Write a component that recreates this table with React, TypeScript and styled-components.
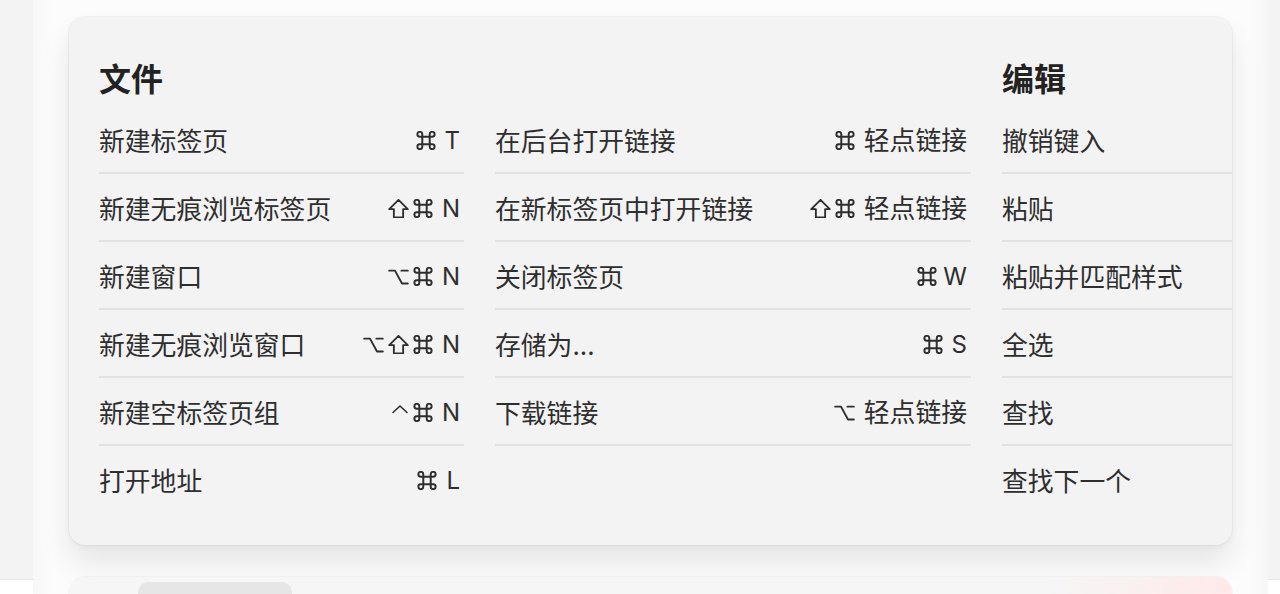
import React from "react";
import styled, { createGlobalStyle } from "styled-components";

const Global = createGlobalStyle`
  html, body {
    margin: 0;
    padding: 0;
  }
  body {
    background: linear-gradient(to bottom, #f3f3f3 0, #f3f3f3 579px, #e4e4e4 579px, #e4e4e4 580px, #ffffff 580px);
    font-family: "Inter", "Noto Sans CJK SC", "DejaVu Sans", sans-serif;
    color: #2b2b2b;
    height: 594px;
    overflow: hidden;
  }
`;

const Shell = styled.div`
  margin-left: 33px;
  width: 1235px;
  height: 594px;
  background: linear-gradient(to right, #f7f7f7 0, #fcfcfc 20px, #fcfcfc calc(100% - 20px), #f6f6f6 100%);
  padding: 17px 0 0 36px;
  box-sizing: border-box;
  display: flex;
  flex-direction: column;
  gap: 32px;
`;

const Card = styled.section`
  width: 1163px;
  height: 528px;
  flex-shrink: 0;
  box-sizing: border-box;
  background: #f3f3f3;
  border-radius: 16px;
  box-shadow: 0 18px 30px rgba(0, 0, 0, 0.09), 0 2px 6px rgba(0, 0, 0, 0.04), 0 0 0 1px rgba(0, 0, 0, 0.03);
  overflow: hidden;
  padding: 43px 0 0 30px;
  display: flex;
  gap: 31px;
`;

const Section = styled.div`
  display: flex;
  flex-direction: column;
  flex-shrink: 0;
`;

const Title = styled.h2`
  margin: 0 0 6px;
  height: 40px;
  line-height: 40px;
  font-size: 32px;
  font-weight: 700;
  color: #222;
`;

const Columns = styled.div`
  display: flex;
  gap: 31px;
`;

const List = styled.ul<{ $width: number; $lastBorder?: boolean }>`
  list-style: none;
  margin: 0;
  padding: 0;
  width: ${(p) => p.$width}px;
  flex-shrink: 0;
  & > li:last-child {
    border-bottom-color: ${(p) => (p.$lastBorder ? "#e2e2e2" : "transparent")};
  }
`;

const Row = styled.li`
  height: 66px;
  border-bottom: 2px solid #e2e2e2;
  display: flex;
  align-items: center;
  justify-content: space-between;
  padding-right: 4px;
`;

const Label = styled.span`
  font-size: 25.8px;
  color: #2e2e2e;
  white-space: nowrap;
`;

const Keys = styled.span`
  display: inline-flex;
  align-items: center;
  gap: 4px;
  padding-top: 3px;
  font-size: 24px;
  color: #2e2e2e;
  white-space: nowrap;
`;

const KeyText = styled.span<{ $tight?: boolean; $cjk?: boolean }>`
  margin-left: ${(p) => (p.$tight ? 2 : 5)}px;
  line-height: 1;
  font-size: ${(p) => (p.$cjk ? 25.8 : 24)}px;
`;

const Glyph = styled.svg`
  display: block;
  fill: none;
  stroke: #2e2e2e;
  stroke-width: 1.6;
  stroke-linejoin: round;
  stroke-linecap: round;
`;

type Sym = "cmd" | "shift" | "opt" | "ctrl";

function KeyIcon({ k }: { k: Sym }) {
  if (k === "cmd")
    return (
      <Glyph width={20} height={19} viewBox="2.3 1.3 15.4 15.4">
        <path d="M7 6V4a2 2 0 1 0-2 2h10a2 2 0 1 0-2-2v10a2 2 0 1 0 2-2H5a2 2 0 1 0 2 2Z" />
      </Glyph>
    );
  if (k === "shift")
    return (
      <Glyph width={21} height={19} viewBox="1 1.2 18 16.4">
        <path d="M10 2L18 10H14V17H6V10H2Z" />
      </Glyph>
    );
  if (k === "opt")
    return (
      <Glyph width={21} height={19} viewBox="1 1 18 16">
        <path d="M2 4H7L13 15H18M12.5 4H18" />
      </Glyph>
    );
  return (
    <Glyph width={18} height={19} viewBox="1 1 18 16">
      <path d="M3 9L10 2.5L17 9" />
    </Glyph>
  );
}

type Item = { label: string; syms?: Sym[]; key?: string; tight?: boolean };

const col1: Item[] = [
  { label: "新建标签页", syms: ["cmd"], key: "T" },
  { label: "新建无痕浏览标签页", syms: ["shift", "cmd"], key: "N" },
  { label: "新建窗口", syms: ["opt", "cmd"], key: "N" },
  { label: "新建无痕浏览窗口", syms: ["opt", "shift", "cmd"], key: "N" },
  { label: "新建空标签页组", syms: ["ctrl", "cmd"], key: "N" },
  { label: "打开地址", syms: ["cmd"], key: "L" },
];

const col2: Item[] = [
  { label: "在后台打开链接", syms: ["cmd"], key: "轻点链接" },
  { label: "在新标签页中打开链接", syms: ["shift", "cmd"], key: "轻点链接" },
  { label: "关闭标签页", syms: ["cmd"], key: "W", tight: true },
  { label: "存储为...", syms: ["cmd"], key: "S" },
  { label: "下载链接", syms: ["opt"], key: "轻点链接" },
];

const col3: Item[] = [
  { label: "撤销键入" },
  { label: "粘贴" },
  { label: "粘贴并匹配样式" },
  { label: "全选" },
  { label: "查找" },
  { label: "查找下一个" },
];

function Rows({ items }: { items: Item[] }) {
  return (
    <>
      {items.map((it) => (
        <Row key={it.label}>
          <Label>{it.label}</Label>
          {it.syms && (
            <Keys>
              {it.syms.map((s, i) => (
                <KeyIcon key={i} k={s} />
              ))}
              <KeyText $tight={it.tight} $cjk={(it.key || "").length > 1}>
                {it.key}
              </KeyText>
            </Keys>
          )}
        </Row>
      ))}
    </>
  );
}

const NextCard = styled.div`
  width: 1163px;
  height: 60px;
  flex-shrink: 0;
  border-radius: 16px;
  background: linear-gradient(to right, #f6f6f6 0, #f6f6f6 84%, #ffe9e9 100%);
  box-shadow: 0 0 0 1px rgba(0, 0, 0, 0.03);
  padding: 5px 0 0 69px;
  box-sizing: border-box;
`;

const Tab = styled.div`
  width: 154px;
  height: 40px;
  border-radius: 10px;
  background: #e6e6e7;
`;

export default function App() {
  return (
    <>
      <Global />
      <Shell>
        <Card>
          <Section>
            <Title>文件</Title>
            <Columns>
              <List $width={365}>
                <Rows items={col1} />
              </List>
              <List $width={476} $lastBorder>
                <Rows items={col2} />
              </List>
            </Columns>
          </Section>
          <Section>
            <Title>编辑</Title>
            <List $width={365}>
              <Rows items={col3} />
            </List>
          </Section>
        </Card>
        <NextCard>
          <Tab />
        </NextCard>
      </Shell>
    </>
  );
}
